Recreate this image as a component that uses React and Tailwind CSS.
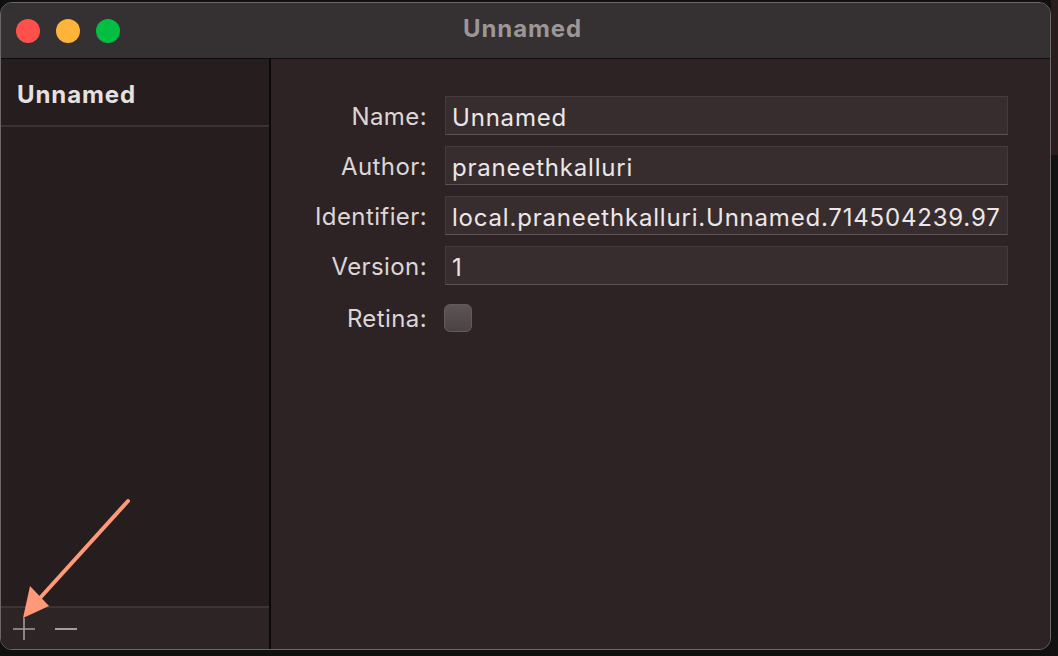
import React from "react";

const font = { fontFamily: "Inter, 'Noto Sans', sans-serif" };

function Field({ label, value }) {
  return (
    <div className="flex items-center h-[39px]">
      <div className="w-[156px] shrink-0 pt-[3px] text-right text-[24px] tracking-[0.4px] text-[#dcd6d6]">{label}</div>
      <div className="ml-[18px] flex-1 h-[39px] bg-[#382d2e] border border-[#453b3c] border-b-[#5d5354] flex items-center pl-[6px] pt-[4px] text-[24px] tracking-[0.8px] text-[#ece7e7] overflow-hidden whitespace-nowrap">
        {value}
      </div>
    </div>
  );
}

export default function App() {
  return (
    <div className="w-[1058px] h-[656px] bg-[#101010] flex overflow-hidden relative" style={font}>
      <div className="w-[1051px] pt-[2px] h-[656px] flex flex-col">
        <div className="w-[1051px] h-[648px] rounded-[12px] border border-[#6d6868] bg-[#2e2324] overflow-hidden flex flex-col">
          {/* title bar */}
          <div className="h-[56px] bg-[#353031] border-b border-[#0c0a0a] flex items-center relative shrink-0">
            <div className="flex items-center gap-[16px] pl-[15px]">
              <div className="w-[24px] h-[24px] rounded-full bg-[#ff514b]" />
              <div className="w-[24px] h-[24px] rounded-full bg-[#feb33a]" />
              <div className="w-[24px] h-[24px] rounded-full bg-[#00bf43]" />
            </div>
            <div className="absolute left-0 right-0 top-0 bottom-0 flex items-center justify-center pr-[6px] pb-[3px] font-bold text-[24px] tracking-[0.9px] text-[#9c9697] pointer-events-none">
              Unnamed
            </div>
          </div>
          <div className="flex flex-1 min-h-0">
            {/* sidebar */}
            <div className="w-[270px] bg-[#261d1e] border-r-2 border-[#0c0909] flex flex-col shrink-0">
              <div className="h-[68px] border-b-2 border-[#3c3233] flex items-center pl-[16px] pt-[5px] font-bold text-[24px] tracking-[0.9px] text-[#e6e1e1]">
                Unnamed
              </div>
              <div className="flex-1" />
              <div className="h-[43px] border-t-2 border-[#3e3536] bg-[#2d2425] flex items-center">
                <svg width="26" height="26" viewBox="0 0 26 26" className="ml-[10px]">
                  <path d="M13 2v22M2 13h22" stroke="#a39d9d" strokeWidth="1.6" />
                </svg>
                <svg width="24" height="4" viewBox="0 0 24 4" className="ml-[17px]">
                  <path d="M1 2h22" stroke="#a39d9d" strokeWidth="1.8" />
                </svg>
              </div>
            </div>
            {/* main */}
            <div className="flex-1 bg-[#2e2324] pt-[37px] pr-[42px]">
              <div className="flex flex-col gap-[11px]">
                <Field label="Name:" value="Unnamed" />
                <Field label="Author:" value="praneethkalluri" />
                <Field label="Identifier:" value="local.praneethkalluri.Unnamed.714504239.97" />
                <Field label="Version:" value="1" />
                <div className="flex items-center h-[39px] mt-[2px]">
                  <div className="w-[156px] shrink-0 pt-[3px] text-right text-[24px] tracking-[0.4px] text-[#dcd6d6]">Retina:</div>
                  <div className="ml-[17px] w-[28px] h-[28px] rounded-[6px] bg-gradient-to-b from-[#5c5455] to-[#4a4243] border border-[#625a5b]" />
                </div>
              </div>
            </div>
          </div>
        </div>
      </div>
      {/* desktop behind */}
      <div className="flex-1 flex flex-col">
        <div className="h-[155px] bg-[#2a1d1d]" />
        <div className="flex-1 bg-[#121212]" />
      </div>
      {/* arrow annotation */}
      <svg className="absolute left-0 top-0 pointer-events-none" width="1058" height="656">
        <line x1="128" y1="501" x2="40" y2="598" stroke="#ff9977" strokeWidth="4" strokeLinecap="round" />
        <polygon points="23,618 30,586 49,606" fill="#ff9977" />
      </svg>
    </div>
  );
}
